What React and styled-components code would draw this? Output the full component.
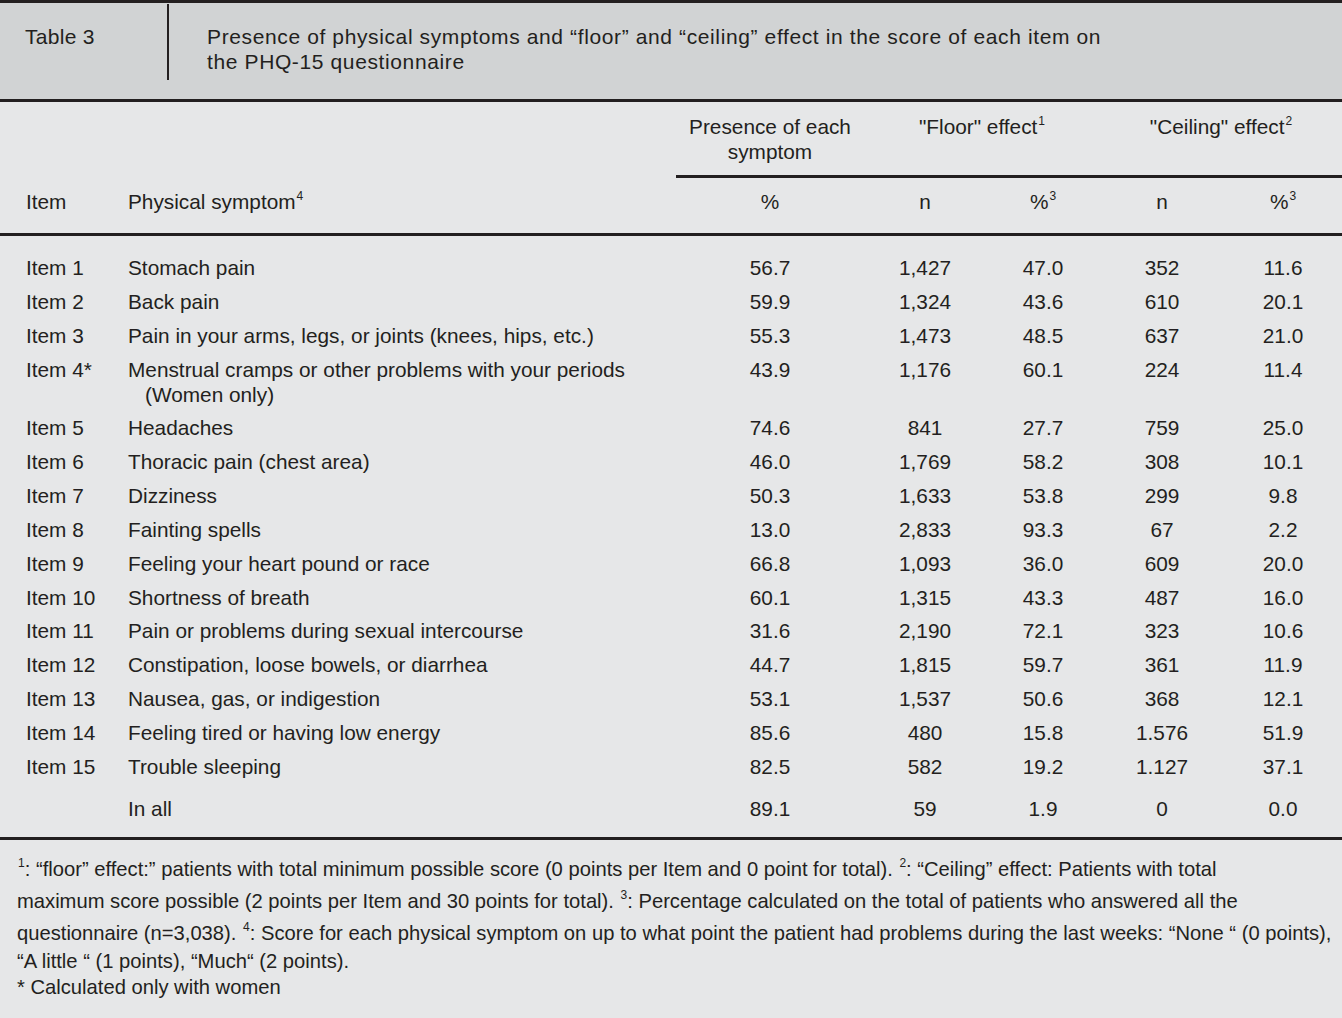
import React from "react";
import styled, { createGlobalStyle } from "styled-components";

const INK = "#231f20";
const COLS = "128px 548px 188px 122px 114px 124px 118px";

const Global = createGlobalStyle`
  html, body {
    margin: 0;
    padding: 0;
    background: #e6e7e8;
  }
  body {
    font-family: "Liberation Sans", Arial, sans-serif;
    color: ${INK};
  }
`;

const Page = styled.div`
  width: 1342px;
  min-height: 1018px;
  background: #e6e7e8;
`;

const TitleBand = styled.div`
  display: flex;
  align-items: flex-start;
  height: 96px;
  background: #d1d3d4;
  border-top: 3px solid ${INK};
  border-bottom: 3px solid ${INK};
  font-size: 21px;
  line-height: 25px;
`;

const TableLabel = styled.div`
  width: 142px;
  padding: 21px 0 0 25px;
  letter-spacing: 0.3px;
`;

const Divider = styled.div`
  width: 2px;
  height: 76px;
  margin-top: 1px;
  background: ${INK};
`;

const Title = styled.div`
  padding: 21px 0 0 38px;
  letter-spacing: 0.62px;
`;

const Grid = styled.div`
  display: grid;
  grid-template-columns: ${COLS};
  font-size: 20.8px;
  line-height: 25px;
`;

const Head = styled(Grid)`
  border-bottom: 3px solid ${INK};
`;

const GroupCell = styled.div`
  grid-column: ${(p) => p.$col};
  grid-row: 1;
  text-align: center;
  padding: 12px 0 11px;
  border-bottom: 3px solid ${INK};
`;

const HeadCell = styled.div`
  grid-row: 2;
  padding: 11px 0 19px;
  padding-left: ${(p) => (p.$first ? "26px" : "0")};
  text-align: ${(p) => (p.$num ? "center" : "left")};
`;

const Body = styled.div`
  padding: 15px 0 11.5px;
  border-bottom: 3px solid ${INK};
`;

const Row = styled(Grid)`
  margin-top: ${(p) => (p.$total ? "8px" : "0")};
`;

const ItemCell = styled.div`
  padding: 4px 0 4.85px 26px;
`;

const SymptomCell = styled.div`
  padding: 4px 20px 4.85px 17px;
  text-indent: -17px;
`;

const NumCell = styled.div`
  padding: 4px 0 4.85px;
  text-align: center;
`;

const Sup = styled.sup`
  font-size: 12px;
  line-height: 0;
  vertical-align: 0;
  position: relative;
  top: -9px;
  margin-left: 1px;
`;

const Notes = styled.div`
  padding: 13px 0 0 17px;
  font-size: 20.2px;
`;

const NoteLine = styled.div`
  height: ${(p) => p.$h}px;
  line-height: ${(p) => p.$h}px;
  white-space: nowrap;
`;

const rows = [
  ["Item 1", "Stomach pain", "56.7", "1,427", "47.0", "352", "11.6"],
  ["Item 2", "Back pain", "59.9", "1,324", "43.6", "610", "20.1"],
  ["Item 3", "Pain in your arms, legs, or joints (knees, hips, etc.)", "55.3", "1,473", "48.5", "637", "21.0"],
  ["Item 4*", "Menstrual cramps or other problems with your periods (Women only)", "43.9", "1,176", "60.1", "224", "11.4"],
  ["Item 5", "Headaches", "74.6", "841", "27.7", "759", "25.0"],
  ["Item 6", "Thoracic pain (chest area)", "46.0", "1,769", "58.2", "308", "10.1"],
  ["Item 7", "Dizziness", "50.3", "1,633", "53.8", "299", "9.8"],
  ["Item 8", "Fainting spells", "13.0", "2,833", "93.3", "67", "2.2"],
  ["Item 9", "Feeling your heart pound or race", "66.8", "1,093", "36.0", "609", "20.0"],
  ["Item 10", "Shortness of breath", "60.1", "1,315", "43.3", "487", "16.0"],
  ["Item 11", "Pain or problems during sexual intercourse", "31.6", "2,190", "72.1", "323", "10.6"],
  ["Item 12", "Constipation, loose bowels, or diarrhea", "44.7", "1,815", "59.7", "361", "11.9"],
  ["Item 13", "Nausea, gas, or indigestion", "53.1", "1,537", "50.6", "368", "12.1"],
  ["Item 14", "Feeling tired or having low energy", "85.6", "480", "15.8", "1.576", "51.9"],
  ["Item 15", "Trouble sleeping", "82.5", "582", "19.2", "1.127", "37.1"],
];

const total = ["", "In all", "89.1", "59", "1.9", "0", "0.0"];

function DataRow({ cells, isTotal }) {
  return (
    <Row $total={isTotal}>
      <ItemCell>{cells[0]}</ItemCell>
      <SymptomCell>{cells[1]}</SymptomCell>
      {cells.slice(2).map((v, i) => (
        <NumCell key={i}>{v}</NumCell>
      ))}
    </Row>
  );
}

export default function App() {
  return (
    <Page>
      <Global />
      <TitleBand>
        <TableLabel>Table 3</TableLabel>
        <Divider />
        <Title>
          Presence of physical symptoms and “floor” and “ceiling” effect in the score of each item on
          <br />
          the PHQ-15 questionnaire
        </Title>
      </TitleBand>

      <Head>
        <GroupCell $col="3">
          Presence of each
          <br />
          symptom
        </GroupCell>
        <GroupCell $col="4 / 6">
          "Floor" effect<Sup>1</Sup>
        </GroupCell>
        <GroupCell $col="6 / 8">
          "Ceiling" effect<Sup>2</Sup>
        </GroupCell>
        <HeadCell $first>Item</HeadCell>
        <HeadCell>
          Physical symptom<Sup>4</Sup>
        </HeadCell>
        <HeadCell $num>%</HeadCell>
        <HeadCell $num>n</HeadCell>
        <HeadCell $num>
          %<Sup>3</Sup>
        </HeadCell>
        <HeadCell $num>n</HeadCell>
        <HeadCell $num>
          %<Sup>3</Sup>
        </HeadCell>
      </Head>

      <Body>
        {rows.map((r) => (
          <DataRow key={r[0]} cells={r} />
        ))}
        <DataRow cells={total} isTotal />
      </Body>

      <Notes>
        <NoteLine $h={32}>
          <Sup>1</Sup>: “floor” effect:” patients with total minimum possible score (0 points per Item and 0 point for total). <Sup>2</Sup>: “Ceiling” effect: Patients with total
        </NoteLine>
        <NoteLine $h={32}>
          maximum score possible (2 points per Item and 30 points for total). <Sup>3</Sup>: Percentage calculated on the total of patients who answered all the
        </NoteLine>
        <NoteLine $h={32}>
          questionnaire (n=3,038). <Sup>4</Sup>: Score for each physical symptom on up to what point the patient had problems during the last weeks: “None “ (0 points),
        </NoteLine>
        <NoteLine $h={24}>“A little “ (1 points), “Much“ (2 points).</NoteLine>
        <NoteLine $h={28}>* Calculated only with women</NoteLine>
      </Notes>
    </Page>
  );
}
